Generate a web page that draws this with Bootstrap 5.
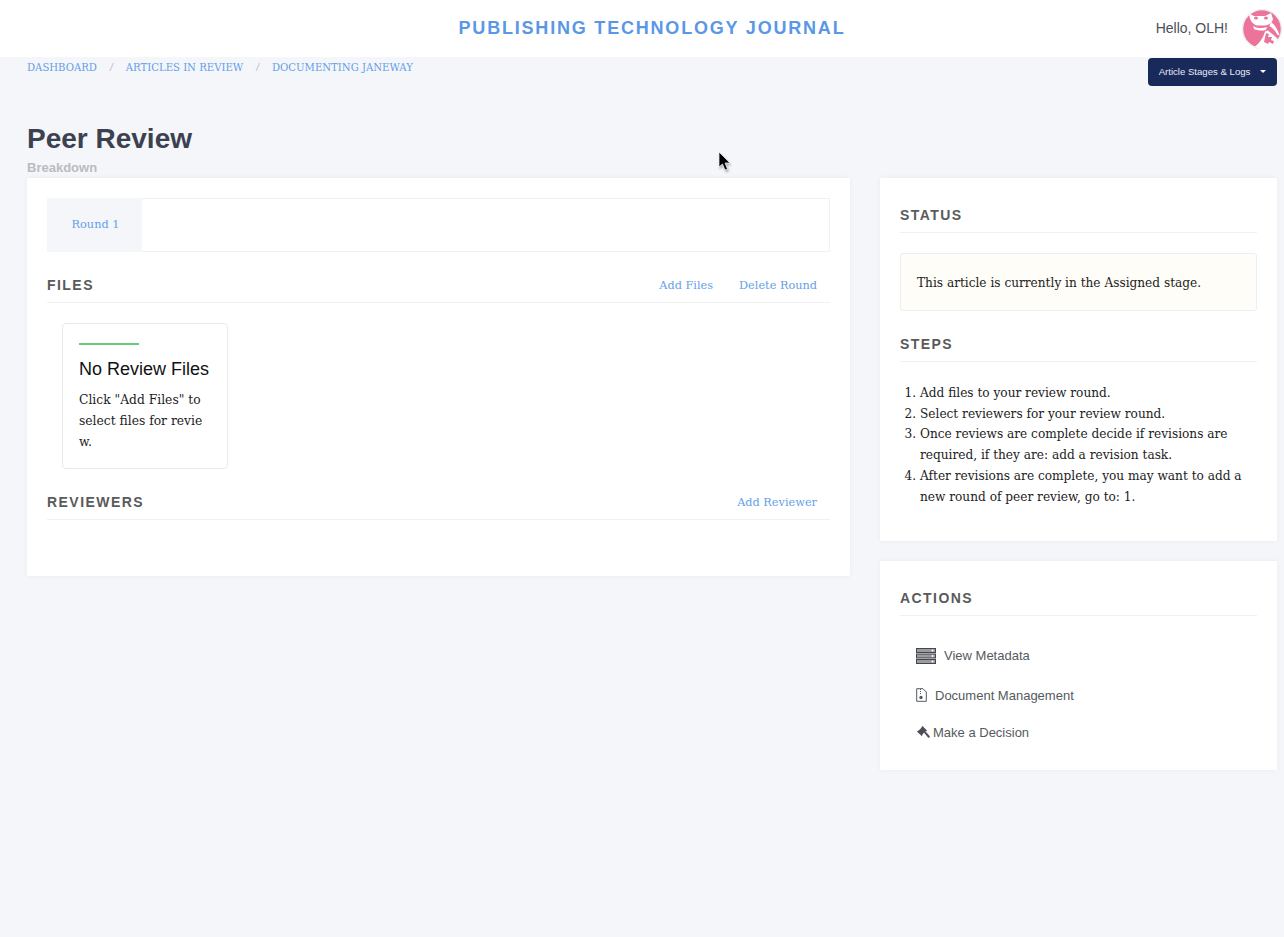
<!doctype html>
<html lang="en"><head><meta charset="utf-8">
<link href="https://cdn.jsdelivr.net/npm/bootstrap@5.3.0/dist/css/bootstrap.min.css" rel="stylesheet">
<style>
html,body{height:100%}
body{background:#f4f6fa;font-family:"DejaVu Serif","Liberation Serif",serif;font-size:12.15px;color:#222;overflow:hidden}
a{text-decoration:none;color:#649fe8}
.topbar{height:57px;background:#fff;font-family:"Liberation Sans",sans-serif;position:relative;padding-left:20px}
.brand{font-size:18px;font-weight:700;letter-spacing:1.8px;color:#5a97e6}
.hello{font-size:14px;color:#4a4f5a}
.usermenu{gap:14px}
.avatar-wrap{width:40px;height:40px;margin-right:2px}
.crumbrow{padding:0 7px 0 27px;height:53px}
.crumbs{font-size:10.1px;text-transform:uppercase;padding-top:3px;height:20px}
.crumbs .sep{color:#b5bac2;padding:0 13px;font-family:"Liberation Sans",sans-serif;font-style:italic}
.stagebtn{background:#18295a;color:#e9ecf5;font-family:"Liberation Sans",sans-serif;font-size:9.6px;border-radius:4px;border:0;padding:0;height:28px;margin-top:1px;width:129px;white-space:nowrap}
.stagebtn::after{content:"";display:inline-block;border:3.5px solid transparent;border-top-color:#fff;border-bottom:0;margin-left:10px;vertical-align:2px}
.pagehead{padding:13px 0 0 27px;font-family:"Liberation Sans",sans-serif;height:68px}
.pagehead h1{font-size:28px;font-weight:700;color:#3c4150;margin:0;line-height:32px}
.pagehead h2{font-size:13px;font-weight:700;color:#b9bcc2;margin:0;line-height:15px;padding-top:5px}
.mainwrap{padding:0 7px 0 27px;gap:30px}
.leftcol{width:823px}.rightcol{width:397px;gap:20px}
.panel{background:#fff;box-shadow:0 0 5px rgba(20,30,60,.05);padding:20px}
.tabbar{border:1px solid #f0f1f4;height:54px}
.tabitem{width:95px;background:#f4f6fa;font-size:11.3px;margin:-1px 0 -1px -1px;padding-left:2px}
.sectitle{font-family:"Liberation Sans",sans-serif;font-size:14px;font-weight:700;letter-spacing:1.45px;color:#5a5a5a;margin:0}
.sechead{border-bottom:1px solid #eef0f3;height:26px;margin-top:25px}
.sechead.firsthead{margin-top:9px}
.seclink{font-size:11.3px;padding:1px 13px 0 0;gap:26px}
.filecard{width:166px;height:146px;border:1px solid #e9eaed;border-radius:4px;margin:20px 0 0 15px;padding:19px 18px 0 16px}
.greenline{width:60px;height:2px;background:#69cc7c}
.filecard h3{font-family:"Liberation Sans",sans-serif;font-size:18px;font-weight:400;color:#111;margin:12px 0 0;line-height:24px;white-space:nowrap}
.filecard p{font-size:12.3px;line-height:21px;margin:9px 0 0;color:#222;word-break:break-all}
.callout{background:#fffdf8;border:1px solid #eceef1;border-radius:3px;height:58px;padding:3px 16px 0;margin-top:20px}
.steps{margin:21px 0 0;padding-left:20px;line-height:20.7px;height:138px}
.actlink{font-family:"Liberation Sans",sans-serif;font-size:13px;color:#555a60;margin-left:16px}
.act1{margin-top:30px}.act2{margin-top:20px}.act3{margin-top:18px;margin-bottom:7px}
.gavelgap{margin-right:3px}
.cursor{position:absolute;left:718px;top:151px;width:14px;height:22px;filter:drop-shadow(1px 2px 1px rgba(0,0,0,.3))}
</style></head><body>
<header class="topbar d-flex align-items-center justify-content-center">
  <a class="brand" href="#">PUBLISHING TECHNOLOGY JOURNAL</a>
  <div class="usermenu position-absolute top-0 end-0 d-flex align-items-center h-100"><span class="hello">Hello, OLH!</span>
  <svg class="avatar-wrap" viewBox="0 0 40 40" role="img" aria-label="avatar"><circle cx="20" cy="20" r="19.7" fill="#fff" stroke="#cfe3ee" stroke-width=".6"/><circle cx="20" cy="20" r="18.8" fill="#ec7399"/>
  <path d="M7 4.500l5 2.500h11l6-3 2 6c-1 4-4 6-8 6.500h-7c-5-.5-8-4-9-12z" fill="#fff"/><ellipse cx="14" cy="9" rx="2" ry="1.600" fill="#ec7399"/><ellipse cx="24" cy="9" rx="2" ry="1.600" fill="#ec7399"/>
  <path d="M11 17c3 2 9 3 14 1l-1 3c-4 1-9 .5-12-1zM29 13c4 3 7 8 8.500 13l-2 0c-2-4-5-7-8-9z" fill="#fff"/>
  <path d="M13 37.500c4-3 8-8 10-15l3-1c3 3 7 5 10 9-3 6-9 9.500-16 9.500-2.500 0-5-1-7-2.500z" fill="#fff"/>
  <path d="M22 33l2-9 3 1-1 3 4 0-1 3 3 1-1 3-4-2-1 2z" fill="#ec7399"/></svg></div>
</header>
<div class="crumbrow d-flex justify-content-between">
  <div class="crumbs"><a href="#">Dashboard</a><span class="sep">/</span><a href="#">Articles in Review</a><span class="sep">/</span><a href="#">Documenting Janeway</a></div>
  <button class="stagebtn" type="button">Article Stages &amp; Logs</button>
</div>
<div class="pagehead"><h1>Peer Review</h1><h2>Breakdown</h2></div>
<main class="mainwrap d-flex align-items-start">
  <div class="leftcol panel">
    <div class="tabbar d-flex"><a class="tabitem d-flex align-items-center justify-content-center" href="#">Round 1</a></div>
    <div class="sechead d-flex justify-content-between align-items-start"><h4 class="sectitle">FILES</h4><div class="seclink d-flex"><a href="#">Add Files</a><a href="#">Delete Round</a></div></div>
    <div class="filecard"><div class="greenline"></div><h3>No Review Files</h3><p>Click "Add Files" to select files for review.</p></div>
    <div class="sechead d-flex justify-content-between align-items-start"><h4 class="sectitle">REVIEWERS</h4><div class="seclink d-flex"><a href="#">Add Reviewer</a></div></div>
    <div style="height:36px"></div>
  </div>
  <div class="rightcol d-flex flex-column">
    <section class="panel">
      <div class="sechead firsthead"><h4 class="sectitle">STATUS</h4></div>
      <div class="callout d-flex align-items-center">This article is currently in the Assigned stage.</div>
      <div class="sechead"><h4 class="sectitle">STEPS</h4></div>
      <ol class="steps"><li>Add files to your review round.</li><li>Select reviewers for your review round.</li><li>Once reviews are complete decide if revisions are required, if they are: add a revision task.</li><li>After revisions are complete, you may want to add a new round of peer review, go to: 1.</li></ol>
    </section>
    <section class="panel">
      <div class="sechead firsthead"><h4 class="sectitle">ACTIONS</h4></div>
      <a class="actlink act1 d-flex align-items-center" href="#"><svg width="20" height="16" viewBox="0 0 20 16" class="me-2"><g fill="#9a9ca0" stroke="#44474d"><rect x=".5" y=".5" width="19" height="4"/><rect x=".5" y="6" width="19" height="4"/><rect x=".5" y="11.500" width="19" height="4"/></g><g fill="#fff"><circle cx="16.500" cy="2.500" r="1"/><circle cx="16.500" cy="8" r="1"/><circle cx="16.500" cy="13.500" r="1"/></g></svg>View Metadata</a>
      <a class="actlink act2 d-flex align-items-center" href="#"><svg width="11" height="14" viewBox="0 0 11 14" class="me-2"><path d="M.7.7h6.300l3.300 3.300v9.300H.7z" fill="none" stroke="#555a60"/><path d="M4.500 1v5" stroke="#555a60" stroke-dasharray="1 1"/><circle cx="5" cy="9.500" r="1.700" fill="#555a60"/></svg>Document Management</a>
      <a class="actlink act3 d-flex align-items-center" href="#"><svg width="14" height="13" viewBox="0 0 14 13" class="gavelgap flex-shrink-0"><path d="M6.500 0l4.500 4.500-1 1-.5-.3-3.200 3.200.3.500-1 1L1 5.400l1-1 .5.300 3.200-3.200-.3-.5z" fill="#4c4f55"/><path d="M8 6.500l1.300-1.300 4.300 4.700c.7.800-.8 2.300-1.600 1.600z" fill="#4c4f55"/></svg>Make a Decision</a>
    </section>
  </div>
</main>
<svg class="cursor" viewBox="0 0 14 22"><path d="M1 1v15l3.500-3 2.500 6 2.500-1-2.500-6h5z" fill="#000" stroke="#fff" stroke-width=".7"/></svg>
<script src="https://cdn.jsdelivr.net/npm/bootstrap@5.3.0/dist/js/bootstrap.bundle.min.js"></script>
</body></html>
